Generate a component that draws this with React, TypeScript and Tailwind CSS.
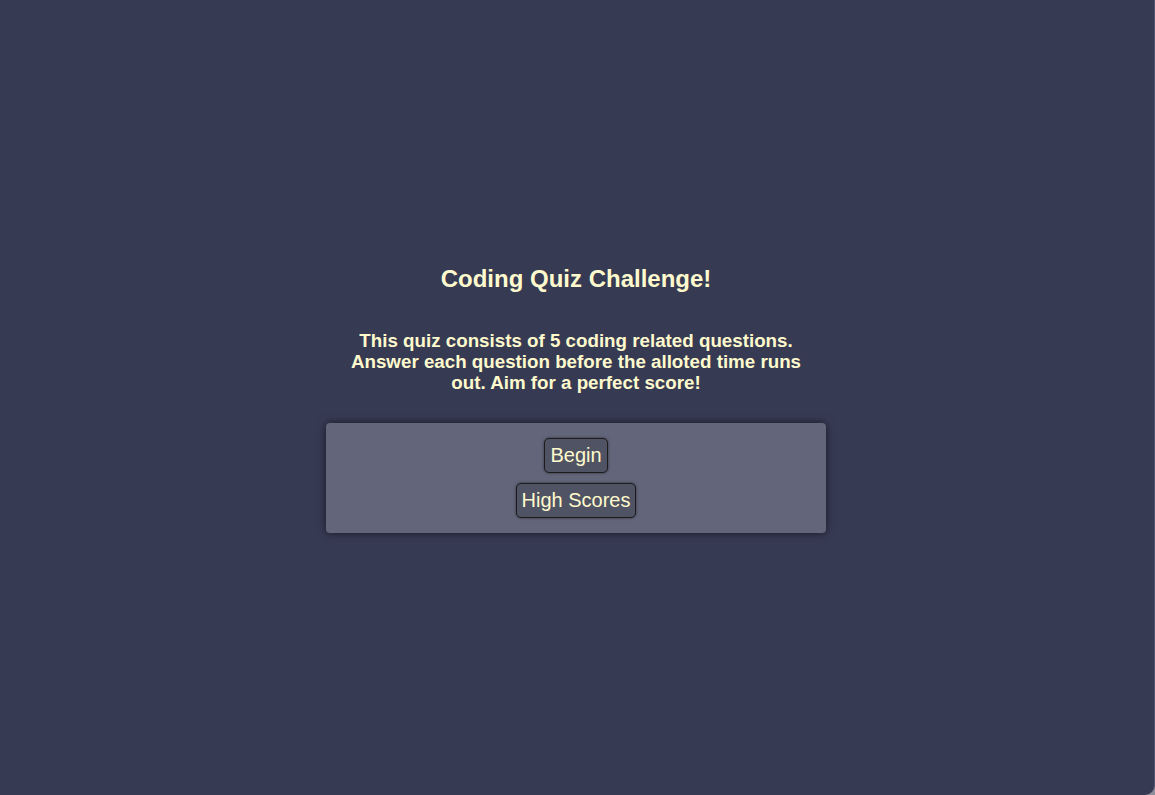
export default function App() {
  return (
    <div className="h-[795px] w-full bg-[#8d8e99]">
      <div
        className="h-full flex flex-col items-center justify-center pt-[2px] pr-[2px] bg-[#363a53] border-r border-[#50546e] rounded-br-[10px] text-[#fffacd]"
        style={{ fontFamily: '"Liberation Sans", Arial, sans-serif' }}
      >
        <h1 className="text-[24px] font-bold leading-[28px]">Coding Quiz Challenge!</h1>
        <p className="mt-[37px] w-[460px] text-center text-[18.75px] font-bold leading-[21px]">
          This quiz consists of 5 coding related questions. Answer each question before the alloted time runs out. Aim for a perfect score!
        </p>
        <div className="mt-[30px] w-[500px] flex flex-col items-center gap-[10px] py-[15px] bg-[#63657a] rounded-[4px] shadow-[0_0_8px_rgba(0,0,0,0.55)]">
          <button className="px-[5px] py-[5px] text-[20px] leading-[23px] bg-[#4f5363] border border-[#1c1c1c] rounded-[5px] shadow-[0_0_3px_rgba(0,0,0,0.5)]">
            Begin
          </button>
          <button className="px-[5px] py-[5px] text-[20px] leading-[23px] bg-[#4f5363] border border-[#1c1c1c] rounded-[5px] shadow-[0_0_3px_rgba(0,0,0,0.5)]">
            High Scores
          </button>
        </div>
      </div>
    </div>
  );
}
